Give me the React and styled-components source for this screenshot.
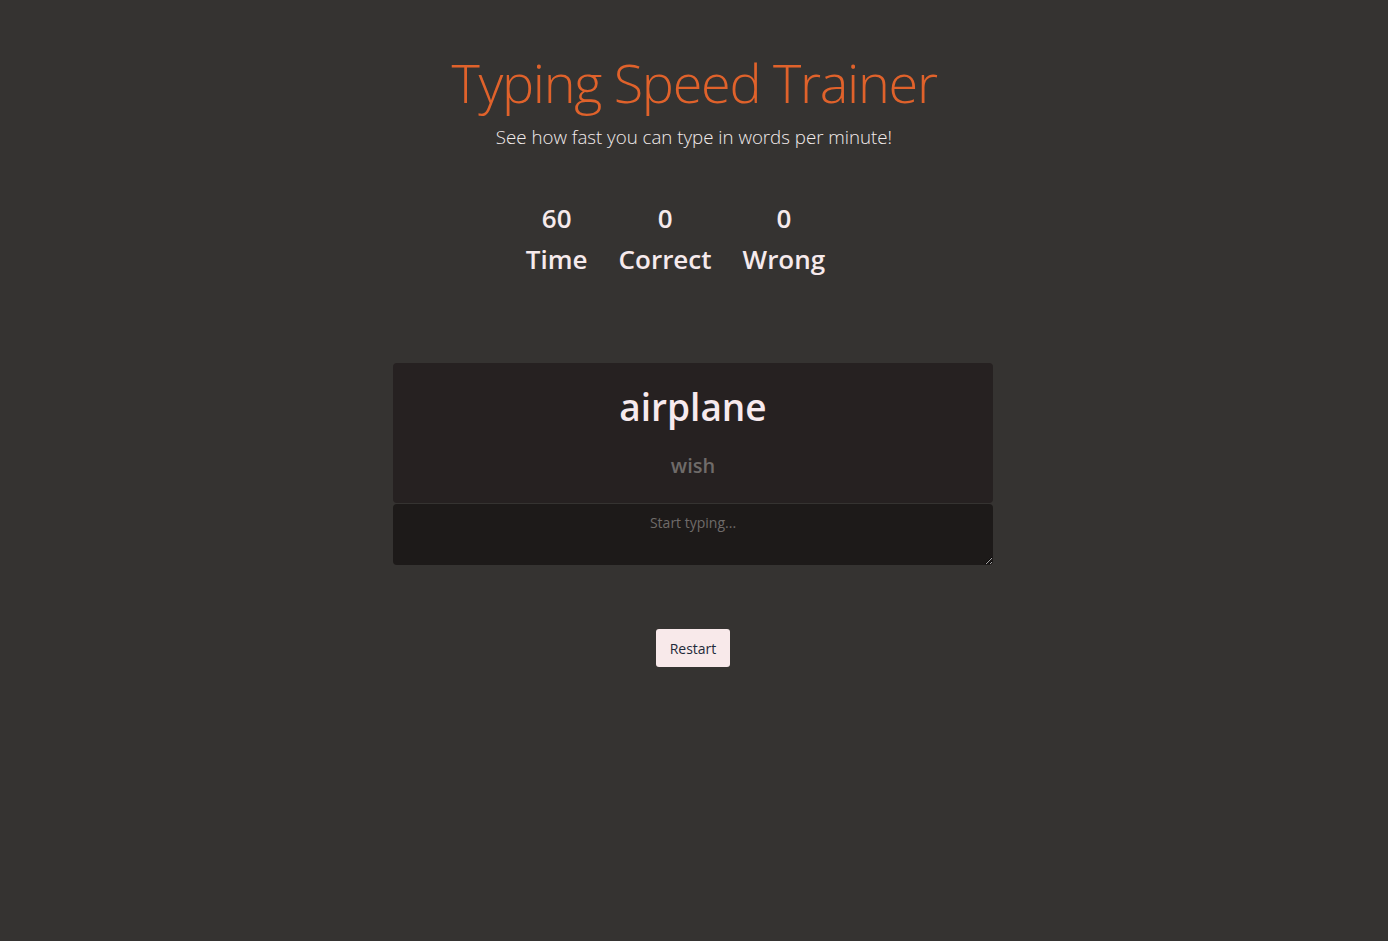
import styled, { createGlobalStyle } from 'styled-components'

const GlobalStyle = createGlobalStyle`
  html, body {
    margin: 0;
    padding: 0;
    background: #353331;
  }
  body {
    font-family: "Open Sans", "Noto Sans", sans-serif;
    color: #f6ecee;
  }
`

function App() {
  return (
    <>
      <GlobalStyle />
      <Page>
        <Header>
          <Title>Typing Speed Trainer</Title>
          <Subtitle>See how fast you can type in words per minute!</Subtitle>
        </Header>

        <Stats>
          <Stat><Value>60</Value><Label>Time</Label></Stat>
          <Stat><Value>0</Value><Label>Correct</Label></Stat>
          <Stat><Value>0</Value><Label>Wrong</Label></Stat>
        </Stats>

        <Trainer>
          <WordCard>
            <CurrentWord>airplane</CurrentWord>
            <NextWord>wish</NextWord>
          </WordCard>
          <Input placeholder="Start typing..." />
        </Trainer>

        <RestartButton>Restart</RestartButton>
      </Page>
    </>
  )
}

const Page = styled.div`
  min-height: 100vh;
  display: flex;
  flex-direction: column;
  align-items: center;
  padding-top: 49px;
  box-sizing: border-box;
`

const Header = styled.header`
  display: flex;
  flex-direction: column;
  align-items: center;
`

const Title = styled.h1`
  margin: 0;
  font-weight: 300;
  font-size: 54px;
  line-height: 66px;
  color: #e0622b;
  letter-spacing: -1.3px;
`

const Subtitle = styled.p`
  margin: 9px 0 0;
  font-weight: 300;
  font-size: 18.7px;
  line-height: 26px;
  color: #f3ecec;
`

const Stats = styled.div`
  display: flex;
  gap: 31px;
  margin-top: 48px;
  padding-right: 37px;
`

const Stat = styled.div`
  display: flex;
  flex-direction: column;
  align-items: center;
  font-weight: 600;
  font-size: 26px;
  color: #f6eaec;
`

const Value = styled.span`
  line-height: 40px;
`

const Label = styled.span`
  line-height: 42px;
`

const Trainer = styled.div`
  width: 600px;
  margin-top: 83px;
  margin-right: 2px;
  display: flex;
  flex-direction: column;
  gap: 1px;
`

const WordCard = styled.div`
  height: 140px;
  background: #262121;
  border-radius: 4px;
  display: flex;
  flex-direction: column;
  align-items: center;
  box-sizing: border-box;
  padding-top: 17px;
`

const CurrentWord = styled.div`
  font-weight: 600;
  font-size: 37px;
  line-height: 54px;
  color: #f7eaee;
`

const NextWord = styled.div`
  margin-top: 17px;
  font-weight: 600;
  font-size: 20px;
  line-height: 30px;
  color: #6f6b69;
`

const Input = styled.textarea`
  height: 61px;
  box-sizing: border-box;
  background: #1d1a19;
  border: none;
  border-radius: 4px;
  padding: 9px 8px;
  resize: vertical;
  font-family: "Open Sans", "Noto Sans", sans-serif;
  font-size: 14px;
  text-align: center;
  color: #f3ecec;
  outline: none;
  &::placeholder {
    color: #6f6b69;
  }
`

const RestartButton = styled.button`
  margin-top: 64px;
  margin-right: 2px;
  height: 38px;
  padding: 0 14px;
  background: #f8e9ea;
  border: none;
  border-radius: 3px;
  font-family: "Open Sans", "Noto Sans", sans-serif;
  font-size: 14px;
  color: #1f2a3a;
  cursor: pointer;
`

export default App
